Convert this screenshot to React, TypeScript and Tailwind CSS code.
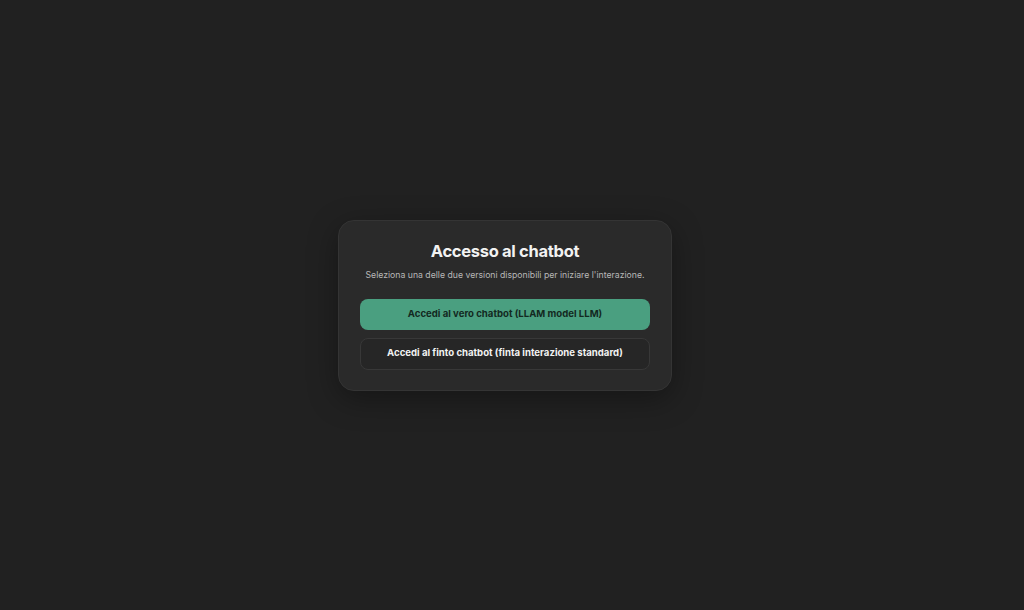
export default function App() {
  return (
    <div className="w-full h-[610px] bg-[#212121] flex items-center justify-center pr-[14px]" style={{ fontFamily: 'Inter, "Noto Sans", sans-serif' }}>
      <div className="w-[334px] rounded-[16px] bg-[#2a2a2a] border border-[#343434] shadow-[0_8px_30px_rgba(0,0,0,0.35)] px-[21px] pt-[18px] pb-[20px] flex flex-col items-center">
        <h1 className="text-[16.5px] leading-[24px] font-bold text-[#f2f2f2] tracking-[-0.3px]">Accesso al chatbot</h1>
        <p className="mt-[6px] text-[8.7px] leading-[13px] text-[#b8b8b8]">Seleziona una delle due versioni disponibili per iniziare l'interazione.</p>
        <div className="mt-[17px] w-full flex flex-col gap-[8px]">
          <button className="w-full h-[31px] rounded-[8px] bg-[#4a9f80] text-[#13291f] text-[9.6px] font-bold">Accedi al vero chatbot (LLAM model LLM)</button>
          <button className="w-full h-[32px] rounded-[8px] bg-[#262626] border border-[#383838] text-[#f2f2f2] text-[9.6px] font-bold">Accedi al finto chatbot (finta interazione standard)</button>
        </div>
      </div>
    </div>
  );
}
